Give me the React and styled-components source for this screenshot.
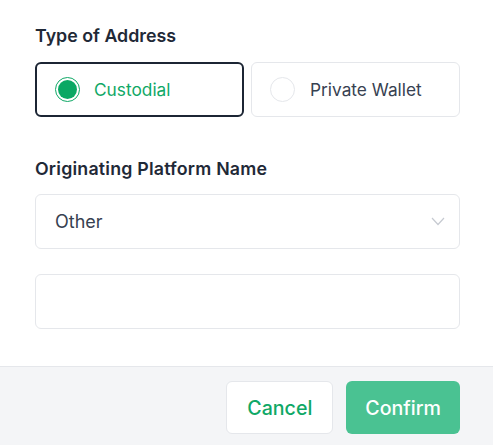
import React from "react";
import styled, { createGlobalStyle } from "styled-components";

const Global = createGlobalStyle`
  html, body { margin: 0; padding: 0; background: #ffffff; }
  body { font-family: Inter, "Noto Sans", sans-serif; -webkit-font-smoothing: antialiased; }
  * { box-sizing: border-box; }
`;

const Page = styled.div`
  width: 493px;
  height: 445px;
  display: flex;
  flex-direction: column;
  background: #fff;
`;

const Body = styled.div`
  flex: 1;
  padding: 24px 33px 0 35px;
  display: flex;
  flex-direction: column;
`;

const Label = styled.div`
  font-size: 17.8px;
  font-weight: 600;
  line-height: 24px;
  letter-spacing: ${(p) => p.$ls || 0}px;
  color: #1f2937;
  margin-top: ${(p) => p.$mt || 0}px;
`;

const Options = styled.div`
  display: grid;
  grid-template-columns: 1fr 1fr;
  gap: 7px;
  margin-top: 14px;
`;

const Option = styled.div`
  height: 55px;
  border-radius: 6px;
  border: ${(p) => (p.$active ? "2px solid #1c2534" : "1px solid #e5e7eb")};
  display: flex;
  align-items: center;
  gap: ${(p) => (p.$active ? 14 : 15)}px;
  padding-left: 18px;
  font-size: 17.3px;
  color: ${(p) => (p.$active ? "#0fa866" : "#374151")};
`;

const Radio = styled.span`
  width: 25px;
  height: 25px;
  border-radius: 50%;
  border: ${(p) => (p.$checked ? "1.5px solid #0fa866" : "1px solid #e5e7eb")};
  display: flex;
  align-items: center;
  justify-content: center;
  flex-shrink: 0;
  &::after {
    content: "";
    width: 19px;
    height: 19px;
    border-radius: 50%;
    background: ${(p) => (p.$checked ? "#0aa864" : "transparent")};
  }
`;

const Field = styled.div`
  height: 55px;
  border: 1px solid #e5e7eb;
  border-radius: 6px;
  display: flex;
  align-items: center;
  justify-content: space-between;
  padding: 0 14px 0 19px;
  font-size: 18px;
  color: #374151;
  margin-top: ${(p) => p.$mt || 0}px;
`;

const Footer = styled.div`
  height: 79px;
  background: #f4f5f7;
  border-top: 1px solid #e5e7eb;
  display: flex;
  justify-content: flex-end;
  align-items: flex-start;
  gap: 13px;
  padding: 14px 33px 0 0;
`;

const Button = styled.button`
  height: 53px;
  padding: 0 ${(p) => (p.$primary ? 19 : 20)}px;
  border-radius: 6px;
  font-family: inherit;
  font-size: 19.6px;
  font-weight: 500;
  border: ${(p) => (p.$primary ? "none" : "1px solid #e5e7eb")};
  background: ${(p) => (p.$primary ? "#4ac292" : "#ffffff")};
  color: ${(p) => (p.$primary ? "#ffffff" : "#0fa866")};
  cursor: pointer;
`;

const Chevron = () => (
  <svg width="14" height="9" viewBox="0 0 14 9" fill="none">
    <path d="M1 1l6 6.5L13 1" stroke="#c6cad1" strokeWidth="1.2" />
  </svg>
);

export default function App() {
  return (
    <Page>
      <Global />
      <Body>
        <Label>Type of Address</Label>
        <Options>
          <Option $active>
            <Radio $checked />
            Custodial
          </Option>
          <Option>
            <Radio />
            Private Wallet
          </Option>
        </Options>
        <Label $mt={40} $ls={0.2}>Originating Platform Name</Label>
        <Field $mt={13}>
          Other
          <Chevron />
        </Field>
        <Field $mt={25} />
      </Body>
      <Footer>
        <Button>Cancel</Button>
        <Button $primary>Confirm</Button>
      </Footer>
    </Page>
  );
}
